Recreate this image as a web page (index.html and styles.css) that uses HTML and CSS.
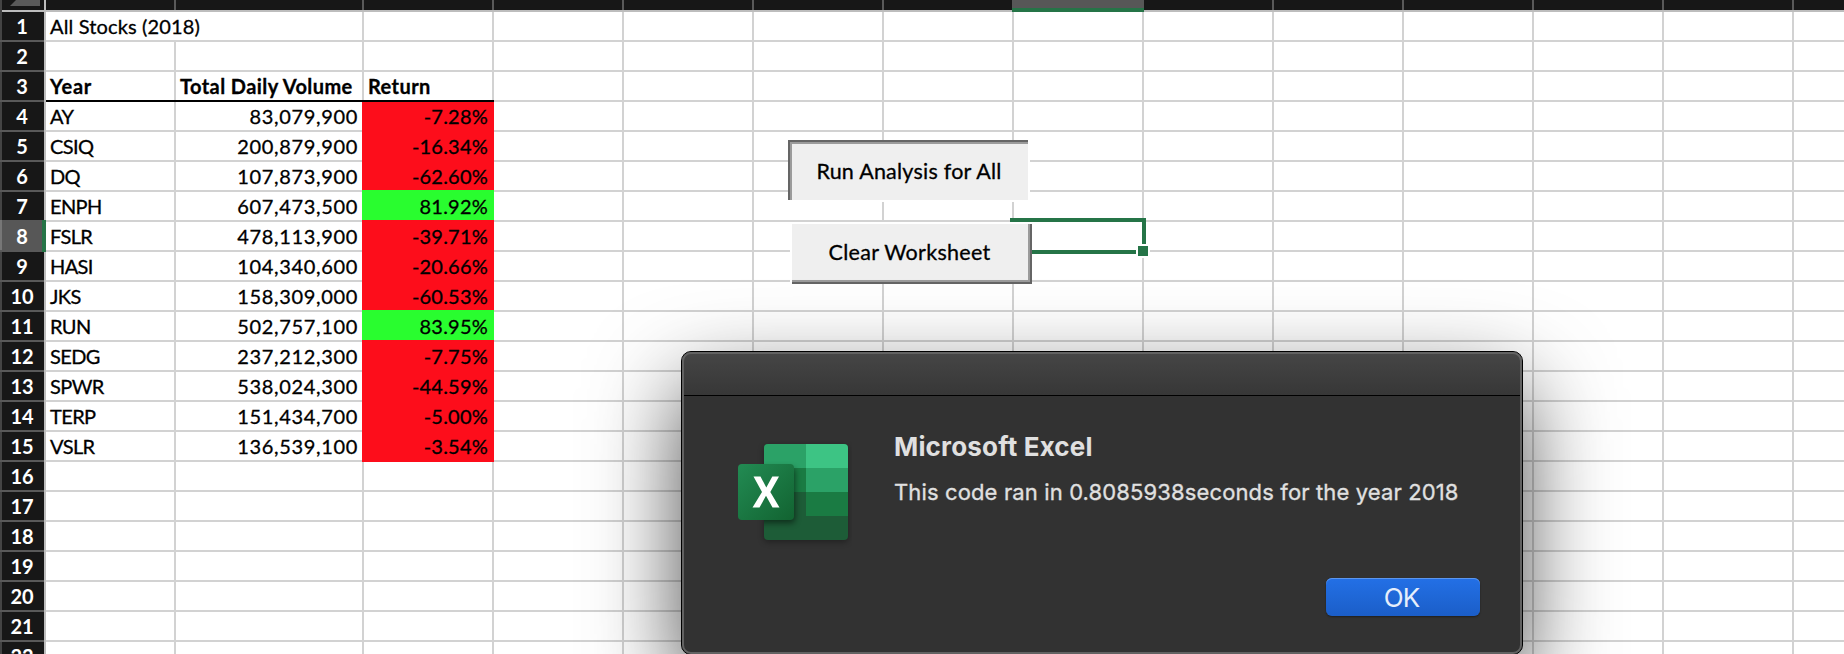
FILE: index.html
```
<!DOCTYPE html>
<html lang="en">
<head>
<meta charset="utf-8">
<title>All Stocks (2018)</title>
<link rel="stylesheet" href="styles.css">
</head>
<body>
<main class="sheet">
  <header class="colheads">
    <div class="corner"><svg width="44" height="10" viewBox="0 0 44 10"><path d="M10 6L16 0H40V6Z" fill="#5a5a5a"/></svg></div>
    <div class="ch"></div><div class="ch"></div><div class="ch"></div><div class="ch"></div><div class="ch"></div><div class="ch"></div><div class="ch"></div><div class="ch selected"></div><div class="ch"></div><div class="ch"></div><div class="ch"></div><div class="ch"></div><div class="ch"></div><div class="ch last"></div>
  </header>
  <div class="row"><div class="rh">1</div><div class="cell wide title">All Stocks (2018)</div><div class="cell"></div><div class="rest"></div></div>
  <div class="row"><div class="rh">2</div><div class="cell"></div><div class="cell"></div><div class="cell"></div><div class="rest"></div></div>
  <div class="row heads"><div class="rh">3</div><div class="cell year">Year</div><div class="cell">Total Daily Volume</div><div class="cell">Return</div><div class="rest"></div></div>
  <div class="row"><div class="rh">4</div><div class="cell">AY</div><div class="cell num">83,079,900</div><div class="cell pct down first">-7.28%</div><div class="rest"></div></div>
  <div class="row"><div class="rh">5</div><div class="cell">CSIQ</div><div class="cell num">200,879,900</div><div class="cell pct down">-16.34%</div><div class="rest"></div></div>
  <div class="row"><div class="rh">6</div><div class="cell">DQ</div><div class="cell num">107,873,900</div><div class="cell pct down">-62.60%</div><div class="rest"></div></div>
  <div class="row"><div class="rh">7</div><div class="cell">ENPH</div><div class="cell num">607,473,500</div><div class="cell pct up">81.92%</div><div class="rest"></div></div>
  <div class="row"><div class="rh active">8</div><div class="cell">FSLR</div><div class="cell num">478,113,900</div><div class="cell pct down">-39.71%</div><div class="rest"></div></div>
  <div class="row"><div class="rh">9</div><div class="cell">HASI</div><div class="cell num">104,340,600</div><div class="cell pct down">-20.66%</div><div class="rest"></div></div>
  <div class="row"><div class="rh">10</div><div class="cell">JKS</div><div class="cell num">158,309,000</div><div class="cell pct down">-60.53%</div><div class="rest"></div></div>
  <div class="row"><div class="rh">11</div><div class="cell">RUN</div><div class="cell num">502,757,100</div><div class="cell pct up">83.95%</div><div class="rest"></div></div>
  <div class="row"><div class="rh">12</div><div class="cell">SEDG</div><div class="cell num">237,212,300</div><div class="cell pct down">-7.75%</div><div class="rest"></div></div>
  <div class="row"><div class="rh">13</div><div class="cell">SPWR</div><div class="cell num">538,024,300</div><div class="cell pct down">-44.59%</div><div class="rest"></div></div>
  <div class="row"><div class="rh">14</div><div class="cell">TERP</div><div class="cell num">151,434,700</div><div class="cell pct down">-5.00%</div><div class="rest"></div></div>
  <div class="row"><div class="rh">15</div><div class="cell">VSLR</div><div class="cell num">136,539,100</div><div class="cell pct down">-3.54%</div><div class="rest"></div></div>
  <div class="row"><div class="rh">16</div><div class="cell"></div><div class="cell"></div><div class="cell"></div><div class="rest"></div></div>
  <div class="row"><div class="rh">17</div><div class="cell"></div><div class="cell"></div><div class="cell"></div><div class="rest"></div></div>
  <div class="row"><div class="rh">18</div><div class="cell"></div><div class="cell"></div><div class="cell"></div><div class="rest"></div></div>
  <div class="row"><div class="rh">19</div><div class="cell"></div><div class="cell"></div><div class="cell"></div><div class="rest"></div></div>
  <div class="row"><div class="rh">20</div><div class="cell"></div><div class="cell"></div><div class="cell"></div><div class="rest"></div></div>
  <div class="row"><div class="rh">21</div><div class="cell"></div><div class="cell"></div><div class="cell"></div><div class="rest"></div></div>
  <div class="row"><div class="rh">22</div><div class="cell"></div><div class="cell"></div><div class="cell"></div><div class="rest"></div></div>

  <div class="selection"><span class="handle"></span></div>
  <button class="macro run">Run Analysis for All</button>
  <button class="macro clear">Clear Worksheet</button>

  <section class="dialog" role="dialog">
    <div class="titlebar"></div>
    <div class="content">
      <svg class="icon" width="118" height="112" viewBox="0 0 118 112">
        <defs>
          <linearGradient id="tile" x1="0" y1="0" x2="1" y2="1"><stop offset="0" stop-color="#228b53"/><stop offset="1" stop-color="#126331"/></linearGradient>
          <clipPath id="book"><rect x="30" y="4" width="84" height="96" rx="4"/></clipPath>
          <filter id="soft" x="-30%" y="-30%" width="160%" height="160%"><feGaussianBlur stdDeviation="3"/></filter>
        </defs>
        <rect x="30" y="6" width="84" height="96" rx="4" fill="#000" opacity=".35" filter="url(#soft)"/>
        <g clip-path="url(#book)">
          <rect x="30" y="4" width="84" height="96" fill="#1d5c37"/>
          <rect x="30" y="4" width="42" height="24" fill="#2ba267"/>
          <rect x="72" y="4" width="42" height="24" fill="#3dc484"/>
          <rect x="30" y="28" width="42" height="24" fill="#1a7b43"/>
          <rect x="72" y="28" width="42" height="24" fill="#2ba267"/>
          <rect x="72" y="52" width="42" height="24" fill="#1a7b43"/>
          <rect x="6" y="28" width="55" height="55" rx="4" fill="#000" opacity=".5" filter="url(#soft)"/>
        </g>
        <rect x="4" y="24" width="56" height="56" rx="4" fill="url(#tile)"/>
        <path d="M19.5 36.5H26.5L32.3 47.5L38.3 36.5H45L36.3 52L45.5 67.5H38.5L32 55.8L25.5 67.5H18.5L28 52Z" fill="#fff"/>
      </svg>
      <div class="message">
        <h1>Microsoft Excel</h1>
        <p>This code ran in 0.8085938seconds for the year 2018</p>
      </div>
    </div>
    <div class="actions"><button class="ok">OK</button></div>
  </section>
</main>
</body>
</html>
```
FILE: styles.css
```
* { box-sizing: border-box; }
html, body { margin: 0; height: 654px; overflow: hidden; background: #fff; }
button { margin: 0; padding: 0; border: 0; }

.sheet {
  position: relative;
  width: 1844px;
  height: 654px;
  overflow: hidden;
  color: #000;
  font: 20px/28px Lato, "Open Sans", sans-serif;
}

.colheads {
  display: grid;
  grid-template-columns: 46px 130px 188px repeat(11, 130px) 50px;
  height: 12px;
  background: #171717;
  box-shadow: inset 0 -2px #bdbdbd;
}
.corner { height: 12px; border-right: 2px solid #bdbdbd; box-shadow: inset 2px 0 #444; }
.corner svg { display: block; }
.ch { height: 10px; border-right: 2px solid #595959; }
.ch.last { border: 0; }
.ch.selected { height: 12px; margin-left: -2px; border: 0; background: #575757; box-shadow: inset 0 -4px #257447; }

.row {
  display: grid;
  grid-template-columns: 46px 130px 188px 130px 1fr;
  height: 30px;
}
.rh {
  border-right: 2px solid #bdbdbd;
  background: #171717;
  box-shadow: inset 0 -2px #595959, inset 2px 0 #444;
  color: #fff;
  font-weight: 700;
  letter-spacing: -.2px;
  text-align: center;
}
.rh.active {
  margin-top: -2px;
  padding-top: 2px;
  border-right: 4px solid #257447;
  background: #575757;
  box-shadow: inset 0 -2px #595959, inset 2px 0 #777;
  padding-left: 2px;
}
.cell {
  padding-left: 4px;
  box-shadow: inset -2px -2px #d2d2d2;
  letter-spacing: -.6px;
  white-space: nowrap;
  -webkit-text-stroke: .3px #000;
}
.wide { grid-column: span 2; }
.title { letter-spacing: .15px; }
.heads .cell { box-shadow: inset 0 -2px #000, inset -2px 0 #d2d2d2; font-weight: 700; letter-spacing: .42px; }
.heads .year { letter-spacing: .75px; }
.num { padding-right: 6px; text-align: right; letter-spacing: .65px; }
.pct {
  margin: -2px 0 0 -2px;
  padding: 2px 6px 0 0;
  box-shadow: none;
  letter-spacing: .22px;
  text-align: right;
}
.pct.first { margin-top: 0; padding-top: 0; }
.down { background: #fd0d1b; }
.up { background: #29fd2f; }
.rest {
  background: repeating-linear-gradient(90deg, transparent 0 128px, #d2d2d2 128px 130px);
  box-shadow: inset 0 -2px #d2d2d2;
}

.selection {
  position: absolute;
  left: 1010px;
  top: 218px;
  width: 136px;
  height: 36px;
  border: 4px solid #257447;
}
.handle {
  position: absolute;
  right: -8px;
  bottom: -8px;
  width: 14px;
  height: 14px;
  border: 2px solid #fff;
  background: #257447;
}

.macro {
  position: absolute;
  width: 242px;
  height: 62px;
  background: #efefef;
  color: #000;
  font: 21.5px/58px Lato, "Open Sans", sans-serif;
  text-align: center;
  -webkit-text-stroke: .3px #000;
}
.run {
  left: 788px;
  top: 140px;
  letter-spacing: .24px;
  box-shadow: inset -2px -2px #fff, inset 2px 2px #656565, inset 4px 4px #9b9b9b;
}
.clear {
  left: 790px;
  top: 222px;
  padding: 0 3px 3px 0;
  letter-spacing: .28px;
  box-shadow: inset 2px 2px #fff, inset -2px -2px #656565, inset -4px -4px #9b9b9b;
}

.dialog {
  position: absolute;
  left: 681px;
  top: 351px;
  width: 842px;
  height: 304px;
  border: 1px solid #000;
  border-radius: 10px;
  background: #323232;
  box-shadow: 0 36px 90px rgba(0, 0, 0, .7);
  color: #e0e0e0;
  font-family: Inter, "Open Sans", sans-serif;
}
.dialog::after {
  content: "";
  position: absolute;
  inset: 0;
  border: 2px solid #626262;
  border-radius: 9px;
  pointer-events: none;
}
.titlebar {
  height: 44px;
  border-bottom: 1px solid #000;
  border-radius: 9px 9px 0 0;
  background: linear-gradient(#464646, #373737);
}
.content { display: flex; gap: 42px; padding: 35px 0 0 52px; height: 182px; }
.icon { flex: none; margin-top: 9px; }
.message h1 { margin: 0; font-size: 26px; line-height: 32px; font-weight: 700; letter-spacing: .17px; }
.message p { margin: 16px 0 0; font-size: 22px; line-height: 26px; letter-spacing: .13px; white-space: nowrap; -webkit-text-stroke: .3px #e0e0e0; }
.actions { display: flex; justify-content: flex-end; padding-right: 42px; }
.ok {
  width: 154px;
  height: 38px;
  padding-right: 3px;
  border-radius: 6px;
  background: linear-gradient(#2370e6, #1b5ec8);
  box-shadow: inset 0 1px #5c96ee, 0 1px 2px rgba(0, 0, 0, .4);
  color: #e6eefb;
  font: 26px/39px Inter, "Open Sans", sans-serif;
  letter-spacing: -.9px;
}
```
